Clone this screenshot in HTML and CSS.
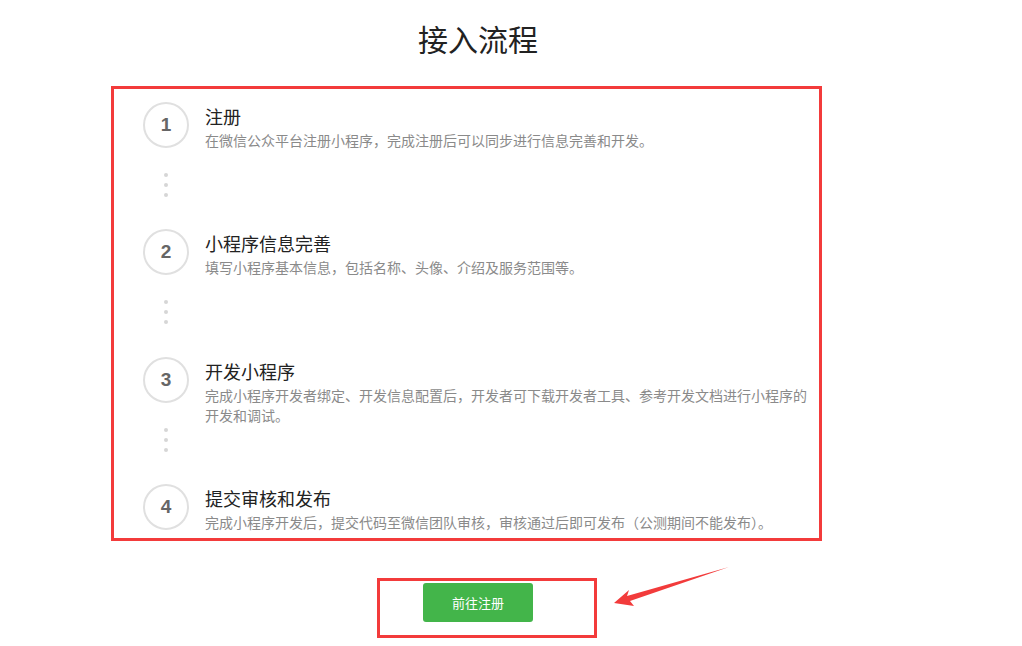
FILE: index.html
```html
<!DOCTYPE html>
<html lang="zh-CN">
<head>
    <meta charset="utf-8">
    <title>接入流程</title>
    <link rel="stylesheet" href="styles.css">
</head>
<body>
    <div id="page">
        <h1>接入流程</h1>
        <div class="steps">
            <div class="step">
                <div class="side">
                    <div class="num">1</div>
                    <div class="dots"><i></i><i></i><i></i></div>
                </div>
                <div class="text">
                    <h2>注册</h2>
                    <p>在微信公众平台注册小程序，完成注册后可以同步进行信息完善和开发。</p>
                </div>
            </div>
            <div class="step">
                <div class="side">
                    <div class="num">2</div>
                    <div class="dots"><i></i><i></i><i></i></div>
                </div>
                <div class="text">
                    <h2>小程序信息完善</h2>
                    <p>填写小程序基本信息，包括名称、头像、介绍及服务范围等。</p>
                </div>
            </div>
            <div class="step">
                <div class="side">
                    <div class="num">3</div>
                    <div class="dots"><i></i><i></i><i></i></div>
                </div>
                <div class="text">
                    <h2>开发小程序</h2>
                    <p>完成小程序开发者绑定、开发信息配置后，开发者可下载开发者工具、参考开发文档进行小程序的开发和调试。</p>
                </div>
            </div>
            <div class="step last">
                <div class="side">
                    <div class="num">4</div>
                </div>
                <div class="text">
                    <h2>提交审核和发布</h2>
                    <p>完成小程序开发后，提交代码至微信团队审核，审核通过后即可发布（公测期间不能发布）。</p>
                </div>
            </div>
        </div>
        <div class="action">
            <button type="button" class="go">前往注册</button>
        </div>
        <svg class="arrow" width="130" height="50" viewBox="0 0 130 50">
            <polygon points="2,41 17,28 15,34 117,5 18,39 22,44" fill="#f23b3b"/>
        </svg>
    </div>
</body>
</html>
```

FILE: styles.css
```css
body{
    margin:0;
    background:#fff;
    font-family:"Noto Sans CJK SC","Microsoft YaHei",sans-serif;
}
#page{
    position:relative;
    width:1022px;
    height:646px;
    overflow:hidden;
}
h1{
    margin:18px 0 28px;
    width:956px;
    text-align:center;
    font-size:30px;
    line-height:40px;
    font-weight:normal;
    color:#222;
}
.steps{
    margin-left:111px;
    width:676px;
    height:436px;
    border:3px solid #f33b3b;
    padding:13px 0 0 29px;
    overflow:hidden;
}
.step{
    display:flex;
    height:127.33px;
}
.step.last{
    height:auto;
}
.side{
    width:46px;
    display:flex;
    flex-direction:column;
    align-items:center;
}
.num{
    width:42px;
    height:42px;
    border:2px solid #e0e0e0;
    border-radius:50%;
    display:flex;
    align-items:center;
    justify-content:center;
    font-family:"Liberation Sans",Arial,sans-serif;
    font-weight:bold;
    font-size:19px;
    color:#666;
}
.dots{
    margin-top:25px;
    display:flex;
    flex-direction:column;
    gap:6px;
}
.dots i{
    display:block;
    width:4px;
    height:4px;
    border-radius:50%;
    background:#d6d6d6;
}
.text{
    margin-left:16px;
    width:612px;
}
h2{
    margin:2px 0 0;
    font-size:18px;
    line-height:24px;
    font-weight:normal;
    color:#222;
}
.text p{
    margin:2px 0 0;
    font-size:14px;
    line-height:20px;
    color:#8a8a8a;
}
.action{
    margin:37px 0 0 377px;
    width:171px;
    height:52px;
    border:3px solid #f33b3b;
    padding:2px 0 0 43px;
}
.go{
    width:110px;
    height:39px;
    border:none;
    border-radius:3px;
    background:#43b54a;
    color:#fff;
    font-family:"Noto Sans CJK SC",sans-serif;
    font-size:13px;
    cursor:pointer;
}
.arrow{
    position:absolute;
    left:612px;
    top:562px;
}
```
